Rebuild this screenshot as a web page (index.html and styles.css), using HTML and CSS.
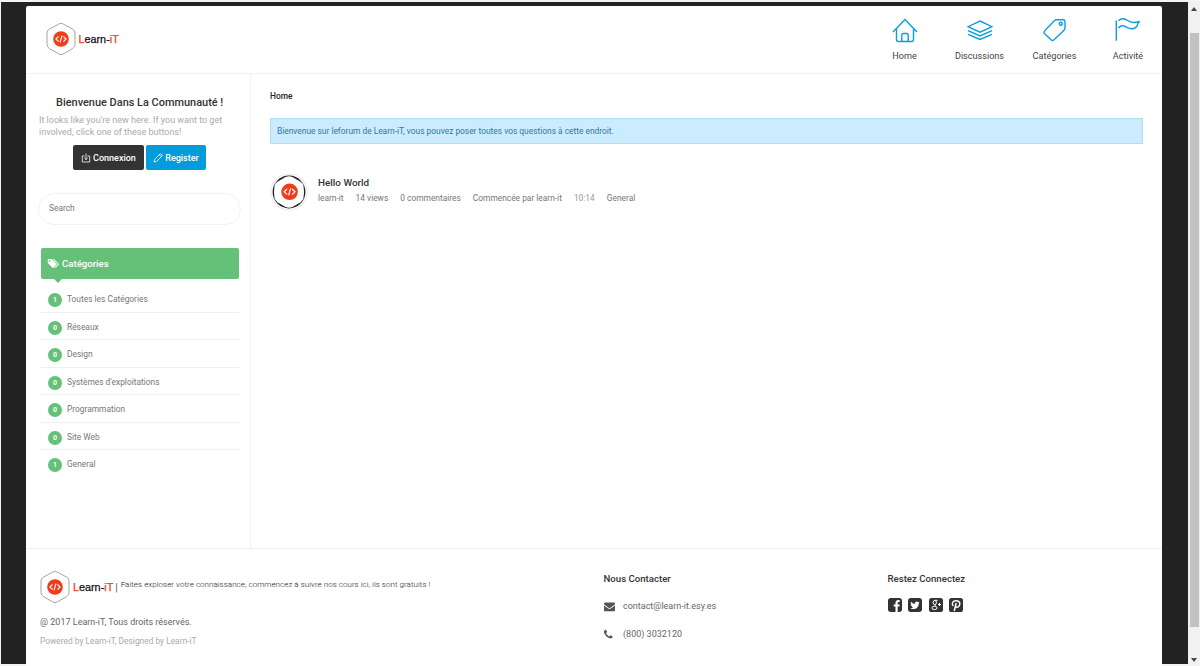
FILE: index.html
```
<!DOCTYPE html>
<html lang="fr">
<head>
    <meta charset="UTF-8">
    <meta name="viewport" content="width=device-width, initial-scale=1.0">
    <title>Learn-iT - Forum</title>
    <link rel="stylesheet" href="styles.css">
</head>
<body>
    <svg class="defs" width="0" height="0">
        <symbol id="logo" viewBox="0 0 30 34">
            <path d="M12.500 2.200Q15 .2 17.500 2.200L26.500 7Q29 8.200 29 11V22.500Q29 25 26.500 26.600L17.500 31.800Q15 33.600 12.500 31.800L3.500 26.600Q1 25 1 22.500V11Q1 8.200 3.500 7Z" fill="#fff" stroke="#999" stroke-width=".9"/>
            <circle cx="15" cy="17" r="7.800" fill="#f03c1a"/>
            <path d="M12.600 14.300L9.900 17l2.700 2.700M17.400 14.300l2.700 2.700-2.700 2.700M16 13.700l-2 6.600" fill="none" stroke="#fff" stroke-width="1.100"/>
        </symbol>
    </svg>

    <div class="window">
        <div class="page">
            <header>
                <a class="brand">
                    <svg class="logo"><use href="#logo"/></svg>
                    <span class="brand-name"><em>L</em>earn-<em>iT</em></span>
                </a>
                <nav>
                    <a class="nav-home">
                        <svg viewBox="0 0 26 26"><path d="M1 14L13 1.500 25 14M4.500 11V21.500Q4.500 23.500 6.500 23.500H19.500Q21.500 23.500 21.500 21.500V11M9.800 23.500V17Q9.800 15.500 11.300 15.500H14.700Q16.200 15.500 16.200 17V23.500"/></svg>
                        <span>Home</span>
                    </a>
                    <a class="nav-discussions">
                        <svg viewBox="0 0 26 26"><path d="M13 3L25 8.700 13 14.200 1 8.700ZM1 12.600L13 18 25 12.600M1 16.300L13 21.500 25 16.300"/></svg>
                        <span>Discussions</span>
                    </a>
                    <a class="nav-categories">
                        <svg viewBox="0 0 26 26"><path d="M14.500 1.700H21Q23 1.700 23 3.700V9.500Q23 11 22 12.200L12 21.800Q10.500 23.200 9.300 21.900L2.400 15.400Q1.300 14.300 2.400 13.100L12.300 2.700Q13.200 1.700 14.500 1.700Z"/><circle cx="18.800" cy="5.800" r="1.500"/></svg>
                        <span>Catégories</span>
                    </a>
                    <a class="nav-activite">
                        <svg viewBox="0 0 26 26"><path d="M1.300 2.500V22.700M3.500 2.700C6 .3 9.500 .3 12.500 2.500 16 5 20 5 24.500 3.300Q22.500 5.500 21.800 8.500C18.500 12 14.500 11 11 8.800 8 7.200 5.500 7.500 3.500 10"/></svg>
                        <span>Activité</span>
                    </a>
                </nav>
            </header>

            <div class="content">
                <aside>
                    <div class="guest">
                        <h4>Bienvenue Dans La Communauté !</h4>
                        <p>It looks like you're new here. If you want to get<br>involved, click one of these buttons!</p>
                        <div class="buttons">
                            <a class="btn btn-dark"><svg viewBox="0 0 10 10"><path d="M3.500 3H1.300V9H8.700V3H6.500M5 .5V6.500M3.300 5L5 6.600 6.700 5"/></svg>Connexion</a>
                            <a class="btn btn-blue"><svg viewBox="0 0 10 10"><path d="M1 9l.6-2.600L7 1Q7.600.5 8.300 1.100L9 1.800Q9.500 2.400 9 3L3.600 8.400ZM6.300 1.800L8.200 3.700"/></svg>Register</a>
                        </div>
                    </div>
                    <input class="search" type="text" placeholder="Search">
                    <div class="categories">
                        <h3><svg viewBox="0 0 2048 1792"><path d="M576 448q0-53-37.500-90.500t-90.500-37.500-90.500 37.500-37.500 90.500 37.500 90.500 90.500 37.500 90.500-37.500 37.500-90.500zm1067 576q0 53-37 90l-491 492q-39 37-91 37-53 0-90-37l-715-716q-38-37-64.500-101t-26.500-117v-416q0-52 38-90t90-38h416q53 0 117 26.500t102 64.500l715 714q37 39 37 91zm384 0q0 53-37 90l-491 492q-39 37-91 37-36 0-59-14t-53-45l470-470q37-37 37-90 0-52-37-91l-715-714q-38-38-102-64.500t-117-26.500h224q53 0 117 26.500t102 64.500l715 714q37 39 37 91z"/></svg>Catégories</h3>
                        <ul>
                            <li><b>1</b><span>Toutes les Catégories</span></li>
                            <li><b>0</b><span>Réseaux</span></li>
                            <li><b>0</b><span>Design</span></li>
                            <li><b>0</b><span>Systèmes d'exploitations</span></li>
                            <li><b>0</b><span>Programmation</span></li>
                            <li><b>0</b><span>Site Web</span></li>
                            <li><b>1</b><span>General</span></li>
                        </ul>
                    </div>
                </aside>

                <main>
                    <div class="breadcrumb">Home</div>
                    <div class="notice">Bienvenue sur leforum de Learn-iT, vous pouvez poser toutes vos questions à cette endroit.</div>
                    <div class="discussion">
                        <svg class="avatar" viewBox="0 0 38 38">
                            <circle cx="19" cy="19" r="18" fill="#fff" stroke="#ececec" stroke-width="1.200"/>
                            <circle cx="19" cy="19" r="16.400" fill="#222"/>
                            <path d="M15.500 4.100Q19 2.600 22.500 4.100L30.500 8.800Q33 10.400 33.500 13Q34.600 19 33.500 25Q33 27.600 30.500 29.200L22.500 33.900Q19 35.400 15.500 33.900L7.500 29.200Q5 27.600 4.500 25Q3.400 19 4.500 13Q5 10.400 7.500 8.800Z" fill="#fff"/>
                            <circle cx="19.600" cy="18.800" r="8.300" fill="#f03c1a"/>
                            <path d="M17.100 16L14.200 18.800l2.900 2.800M22.100 16l2.900 2.800-2.900 2.800M20.600 15.300l-2 7" fill="none" stroke="#fff" stroke-width="1.200"/>
                        </svg>
                        <div class="discussion-text">
                            <h2>Hello World</h2>
                            <div class="meta">
                                <span>learn-it</span>
                                <span>14 views</span>
                                <span>0 commentaires</span>
                                <span>Commencée par learn-it</span>
                                <span class="time">10:14</span>
                                <span>General</span>
                            </div>
                        </div>
                    </div>
                </main>
            </div>

            <footer>
                <div class="about">
                    <div class="brand">
                        <svg class="logo"><use href="#logo"/></svg>
                        <span class="brand-name"><em>L</em>earn-<em>iT</em></span>
                        <span class="bar">|</span>
                        <span class="slogan">Faites exploser votre connaissance, commencez à suivre nos cours ici, ils sont gratuits !</span>
                    </div>
                    <p class="copyright">@ 2017 Learn-iT, Tous droits réservés.</p>
                    <p class="powered">Powered by Learn-iT, Designed by Learn-iT</p>
                </div>
                <div class="contact">
                    <h5>Nous Contacter</h5>
                    <p><svg viewBox="0 0 1792 1792"><path d="M1792 710v794q0 66-47 113t-113 47h-1472q-66 0-113-47t-47-113v-794q44 49 101 87 362 246 497 345 57 42 92.500 65.500t94.500 48 110 24.500h2q51 0 110-24.500t94.500-48 92.500-65.500q170-123 498-345 57-39 100-87zm0-294q0 79-49 151t-122 123q-376 261-468 325-10 7-42.500 31t-54 38.500-52 32.500-57.500 27-50 9h-2q-23 0-50-9t-57.500-27-52-32.500-54-38.500-42.500-31q-91-64-262-182.500t-205-142.500q-62-42-117-115.500t-55-136.500q0-78 41.500-130t118.500-52h1472q65 0 112.500 47t47.500 113z"/></svg>contact@learn-it.esy.es</p>
                    <p><svg viewBox="192 0 1792 1792"><path d="M1600 1240q0 27-10 70.500t-21 68.500q-21 50-122 106-94 51-186 51-27 0-53-3.500t-57.500-12.500-47-14.500-55.500-20.500-49-18q-98-35-175-83-127-79-264-216t-216-264q-48-77-83-175-3-9-18-49t-20.500-55.500-14.500-47-12.500-57.500-3.500-53q0-92 51-186 56-101 106-122 25-11 68.500-21t70.500-10q14 0 21 3 18 6 53 76 11 19 30 54t35 63.500 31 53.500q3 4 17.500 25t21.500 35.500 7 28.500q0 20-28.500 50t-62 55-62 53-28.500 46q0 9 5 22.500t8.500 20.500 14 24 11.500 19q76 137 174 235t235 174q2 1 19 11.500t24 14 20.500 8.500 22.500 5q18 0 46-28.500t53-62 55-62 50-28.500q14 0 28.500 7t35.500 21.500 25 17.500q25 15 53.500 31t63.500 35 54 30q70 35 76 53 3 7 3 21z"/></svg>(800) 3032120</p>
                </div>
                <div class="social">
                    <h5>Restez Connectez</h5>
                    <div class="social-icons">
                        <svg viewBox="128 128 1536 1536"><path d="M1376 128q119 0 203.500 84.500t84.500 203.500v960q0 119-84.500 203.500t-203.500 84.500h-188v-595h199l30-232h-229v-148q0-56 23.500-84t91.500-28l122-1v-207q-63-9-178-9-136 0-217.500 80t-81.500 226v171h-200v232h200v595h-532q-119 0-203.500-84.500t-84.500-203.500v-960q0-119 84.500-203.500t203.500-84.500h960z"/></svg>
                        <svg viewBox="128 128 1536 1536"><path d="M1408 610q-56 25-121 34 68-40 93-117-65 38-134 51-61-66-153-66-87 0-148.500 61.500t-61.500 148.500q0 29 5 48-129-7-242-65t-192-155q-29 50-29 106 0 114 91 175-47-1-100-26v2q0 75 50 133.500t123 72.500q-29 8-51 8-13 0-39-4 21 63 74.500 104t121.500 42q-116 90-261 90-26 0-50-3 148 94 322 94 112 0 210-35.500t168-95 120.500-137 75-162 24.500-168.500q0-18-1-27 63-45 105-109zm256-194v960q0 119-84.500 203.500t-203.500 84.500h-960q-119 0-203.500-84.500t-84.500-203.500v-960q0-119 84.500-203.500t203.500-84.500h960q119 0 203.500 84.500t84.500 203.500z"/></svg>
                        <svg viewBox="0 0 14 14"><rect width="14" height="14" rx="2.600"/><g fill="none" stroke="#fff"><ellipse cx="5.800" cy="4.500" rx="1.700" ry="2"/><ellipse cx="5.500" cy="9.900" rx="2.500" ry="1.700"/><path d="M5.500 2.300H8.500M6 6.500Q5.300 7.300 6.800 8.200M9 6.500h3M10.500 5v3"/></g></svg>
                        <svg viewBox="0 0 14 14"><rect width="14" height="14" rx="2.600"/><path d="M4.200 8Q2.700 6.300 3.600 4.500C5 1.900 10.800 1.900 10.800 5.800 10.800 8.700 8 10 6.600 8.500M7.200 5L5.200 13" fill="none" stroke="#fff" stroke-width="1.500"/></svg>
                    </div>
                </div>
            </footer>
        </div>
        <div class="scrollbar">
            <svg viewBox="0 0 6 4"><path d="M0 4L3 0 6 4Z"/></svg>
            <div class="thumb"></div>
            <svg viewBox="0 0 6 4"><path d="M0 0L3 4 6 0Z"/></svg>
        </div>
    </div>
</body>
</html>
```
FILE: styles.css
```
* {
    box-sizing: border-box;
}
body {
    margin: 0;
    padding: 2px 0 0 1px;
    height: 666px;
    overflow: hidden;
    background: #f4f4f4;
    font-family: Roboto, sans-serif;
    font-size: 9px;
    color: #555;
}
h2, h3, h4, h5, p, ul {
    margin: 0;
    padding: 0;
}
svg {
    display: block;
    flex: none;
}
.defs {
    position: absolute;
}
.window {
    display: flex;
    height: 662px;
    background: #222;
}
.page {
    width: 1136px;
    height: 660px;
    margin: 4px 26px 0 25px;
    background: #fff;
    border-radius: 2px 2px 0 0;
}
header {
    display: flex;
    justify-content: space-between;
    height: 68px;
    border-bottom: 1px solid #f2f2f2;
}
.brand {
    display: flex;
    align-items: center;
}
header .brand {
    height: 34px;
    margin: 16px 0 0 19.5px;
}
.logo {
    width: 30px;
    height: 34px;
}
.brand-name {
    margin: -1px 0 0 3px;
    font: 10.8px "Liberation Sans", Arial, sans-serif;
    color: #111;
    -webkit-text-stroke: 0.25px;
}
.brand-name em {
    font-style: normal;
    color: #f03c1a;
}
nav {
    display: flex;
    padding-top: 12px;
    margin-right: -2px;
}
nav a {
    display: flex;
    flex-direction: column;
    align-items: center;
    width: 75px;
    color: #444;
    font-size: 9.1px;
}
nav a.nav-activite {
    width: 72px;
}
nav svg {
    width: 26px;
    height: 26px;
    fill: none;
    stroke: #0a9fdc;
    stroke-width: 1.4;
    margin-bottom: 7px;
}
.content {
    display: flex;
    height: 474px;
}
aside {
    width: 225px;
    border-right: 1px solid #f2f2f2;
}
.guest {
    padding: 22px 12px 0;
}
.guest h4 {
    font-size: 10.95px;
    line-height: 14px;
    font-weight: 500;
    color: #333;
    padding-left: 18px;
    white-space: nowrap;
}
.guest p {
    margin-top: 4px;
    padding-left: 1px;
    line-height: 12px;
    color: #aaa;
    white-space: nowrap;
}
.buttons {
    display: flex;
    gap: 2px;
    margin: 7px 0 0 35px;
}
.btn {
    display: flex;
    align-items: center;
    justify-content: center;
    height: 25px;
    border-radius: 2px;
    color: #fff;
    font-weight: 500;
}
.btn svg {
    width: 10px;
    height: 10px;
    margin-right: 2px;
    fill: none;
    stroke: #fff;
    stroke-width: 0.8;
}
.btn-dark {
    width: 71px;
    background: #333;
}
.btn-blue {
    width: 60px;
    background: #049cdb;
}
.search {
    display: block;
    width: 203px;
    height: 32px;
    margin: 23px 0 0 12px;
    padding: 0 10px 2px;
    border: 1px solid #f2f2f2;
    border-radius: 16px;
    font: 8.4px Roboto, sans-serif;
}
.search::placeholder {
    color: #777;
}
.categories {
    width: 198px;
    margin: 23px 0 0 15px;
}
.categories h3 {
    position: relative;
    display: flex;
    align-items: center;
    height: 31px;
    padding-left: 6px;
    background: #65c178;
    border-radius: 2px;
    color: #fff;
    font-size: 9.6px;
    font-weight: 500;
}
.categories h3::after {
    content: "";
    position: absolute;
    left: 13px;
    top: 31px;
    border: 4px solid transparent;
    border-top-color: #65c178;
}
.categories h3 svg {
    width: 12px;
    height: 11px;
    margin-right: 3px;
    fill: #fff;
}
.categories ul {
    list-style: none;
    padding-top: 6px;
}
.categories li {
    display: flex;
    height: 27.5px;
    padding: 8px 0 0 7px;
    border-bottom: 1px solid #f0f0f0;
    font-size: 8.4px;
    line-height: 12px;
    color: #777;
}
.categories li:last-child {
    border: 0;
}
.categories b {
    width: 14px;
    height: 14px;
    margin-right: 5px;
    border-radius: 50%;
    background: #65c178;
    color: #fff;
    font-size: 7px;
    line-height: 14px;
    text-align: center;
}
main {
    padding: 16px 19px 0;
    flex: 1;
}
.breadcrumb {
    font-weight: 500;
    line-height: 12px;
    font-size: 8.4px;
    color: #222;
}
.notice {
    height: 26px;
    margin-top: 16px;
    padding-left: 6px;
    background: #cdebfe;
    border: 1px solid #b0ddf6;
    color: #1b7eac;
    font-size: 8.4px;
    line-height: 24px;
}
.discussion {
    display: flex;
    margin-top: 29px;
}
.avatar {
    width: 38px;
    height: 38px;
}
.discussion-text {
    margin-left: 10px;
}
.discussion h2 {
    margin-top: 3px;
    color: #333;
    font-size: 9.9px;
    font-weight: 500;
    line-height: 14px;
}
.meta {
    display: flex;
    gap: 12px;
    margin-top: 3px;
    font-size: 8.4px;
    line-height: 11px;
    color: #777;
}
.meta .time {
    color: #999;
}
footer {
    display: flex;
    height: 118px;
    border-top: 1px solid #f2f2f2;
}
.about {
    width: 577.5px;
    padding: 21px 0 0 14px;
}
.bar {
    margin: 0 3px 0 2px;
    font-size: 10px;
}
.slogan {
    margin-top: -5px;
    font-size: 8px;
    color: #222;
    font-weight: 300;
    letter-spacing: 0.04px;
}
.copyright {
    margin-top: 12px;
    color: #666;
    line-height: 12px;
}
.powered {
    margin-top: 7px;
    font-size: 8.4px;
    line-height: 12px;
    color: #aaa;
}
footer h5 {
    color: #333;
    font-size: 9.65px;
    font-weight: 500;
    line-height: 12px;
}
.contact {
    width: 284px;
    padding-top: 24px;
}
.contact p {
    display: flex;
    align-items: center;
    height: 28px;
    color: #666;
}
.contact h5 {
    margin-bottom: 7px;
}
.contact p svg {
    width: 11px;
    height: 11px;
    margin: 1px 8.5px 0 0;
    fill: #555;
}
.social {
    padding-top: 24px;
}
.social-icons {
    display: flex;
    gap: 6.5px;
    margin-top: 13px;
}
.social-icons svg {
    width: 14px;
    height: 14px;
    fill: #333;
}
.scrollbar {
    display: flex;
    flex-direction: column;
    align-items: center;
    width: 12px;
    background: #f1f1f1;
    padding-top: 5px;
}
.scrollbar svg {
    width: 6px;
    height: 4px;
    fill: #444;
}
.thumb {
    width: 9px;
    height: 594px;
    margin: 22px 0 31px;
    background: #c1c1c1;
}
```
